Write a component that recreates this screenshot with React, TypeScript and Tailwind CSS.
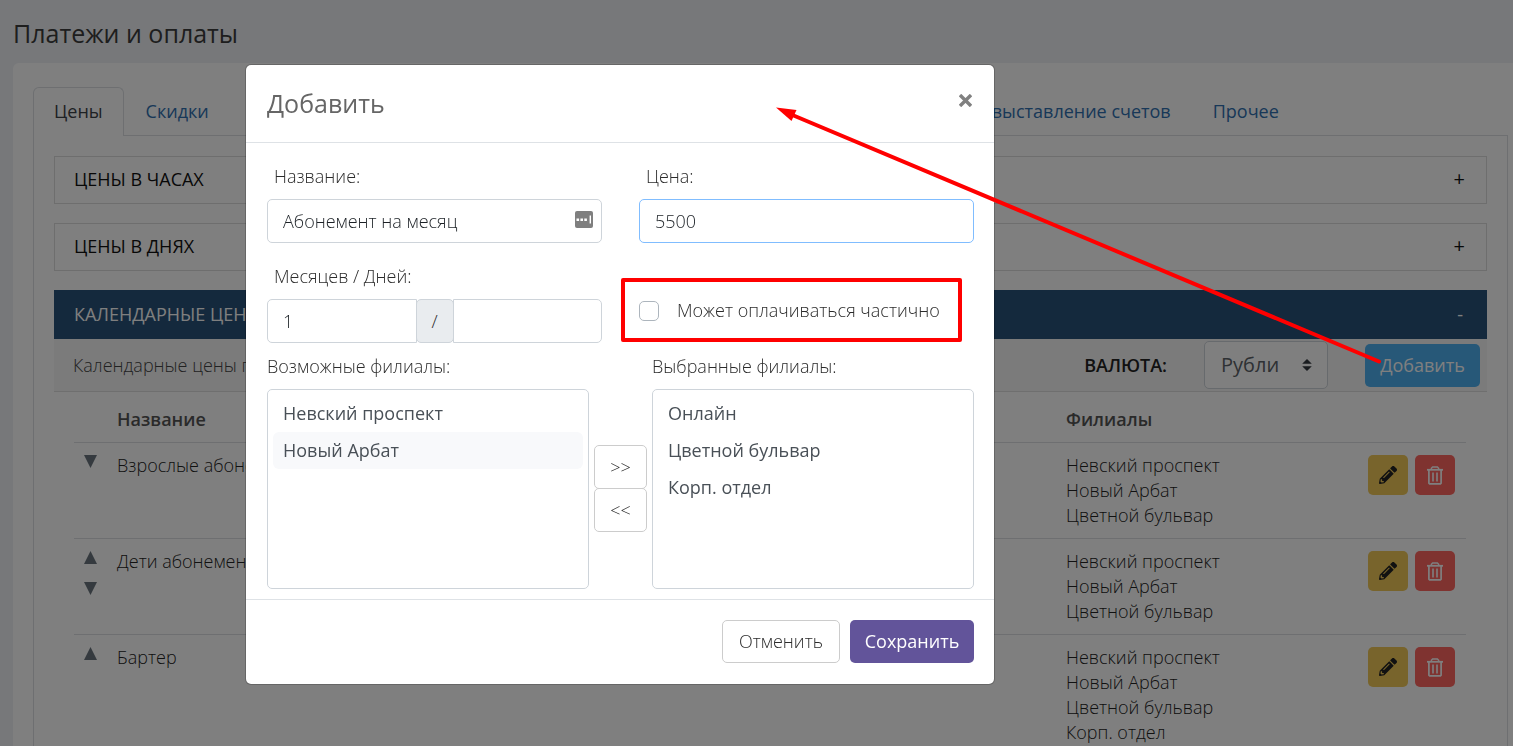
import { useState } from "react";
import { FaPencilAlt } from "react-icons/fa";

interface PriceRow {
  name: string;
  branches: string[];
  up: boolean;
  down: boolean;
}

const rows: PriceRow[] = [
  {
    name: "Взрослые абонемент",
    branches: ["Невский проспект", "Новый Арбат", "Цветной бульвар"],
    up: false,
    down: true,
  },
  {
    name: "Дети абонемент",
    branches: ["Невский проспект", "Новый Арбат", "Цветной бульвар"],
    up: true,
    down: true,
  },
  {
    name: "Бартер",
    branches: [
      "Невский проспект",
      "Новый Арбат",
      "Цветной бульвар",
      "Корп. отдел",
    ],
    up: true,
    down: false,
  },
];

const fieldClass =
  "h-11 rounded-[5px] border bg-white px-[15px] text-lg text-[#1c2126] focus:outline-none";
const listClass =
  "block h-[200px] w-full rounded-[5px] border border-[#ced4da] p-[5px] text-[#495057]";
const optionClass = "h-[37px] rounded-md px-[10px] py-[6px] leading-[25px]";

function TrashIcon() {
  return (
    <svg width="16" height="19" viewBox="0 0 16 19" fill="none" stroke="currentColor" aria-hidden="true">
      <path d="M0 3.8h16" strokeWidth="1.8" />
      <path d="M4.4 3.5V2.2L5.6 1h4.8l1.2 1.2v1.3" strokeWidth="1.5" />
      <path d="M1.9 4v13.2l.7.7h10.8l.7-.7V4" strokeWidth="1.7" />
      <path d="M6 6.5v9M10 6.5v9" strokeWidth="1.6" />
    </svg>
  );
}

function MoveButton({ dir }: { dir: "up" | "down" }) {
  return (
    <button
      aria-label={dir === "up" ? "Выше" : "Ниже"}
      className="flex h-[31px] items-start text-[#6a757e]"
    >
      <svg width="13" height="13" viewBox="0 0 13 13" fill="currentColor">
        <path d={dir === "up" ? "M6.5 0 13 13H0z" : "M0 0h13L6.5 13z"} />
      </svg>
    </button>
  );
}

function Accordion({ title }: { title: string }) {
  return (
    <button className="mb-[19px] flex h-12 w-full items-center justify-between border border-[#dcdcdc] pr-[21px] pb-[2px] pl-[19px] text-lg font-medium text-[#111]">
      <span>{title}</span>
      <span className="text-xl font-normal">+</span>
    </button>
  );
}

function Page() {
  return (
    <div className="pt-[15px] pl-[13px]">
      <h1 className="mb-3 text-[25px] leading-9 font-normal text-[#3c3c3c]">
        Платежи и оплаты
      </h1>
      <div className="rounded-tl-md bg-white pt-6 pr-[5px] pl-5">
        {/* Tabs */}
        <nav className="flex h-[49px] border-b border-[#dcdfe3] text-lg leading-[48px] font-medium text-[#3070b0]">
          <a
            href="#prices"
            className="-mb-px h-[49px] rounded-t-md border border-b-0 border-[#dcdfe3] bg-white px-5 leading-[46px] text-[#3c4248]"
          >
            Цены
          </a>
          <a href="#discounts" className="px-[22px]">
            Скидки
          </a>
          <span className="w-[740px]" />
          <a href="#invoices" className="px-[21px]">
            выставление счетов
          </a>
          <a href="#other" className="px-[21px]">
            Прочее
          </a>
        </nav>

        <div className="border-x border-[#dcdfe3] px-5 pt-5">
          <Accordion title="ЦЕНЫ В ЧАСАХ" />
          <Accordion title="ЦЕНЫ В ДНЯХ" />
          <button className="flex h-[49px] w-full items-center justify-between bg-[#28527a] pr-6 pb-px pl-5 text-lg font-medium text-white">
            <span>КАЛЕНДАРНЫЕ ЦЕНЫ</span>
            <span>-</span>
          </button>

          {/* Toolbar */}
          <div className="flex h-[53px] items-center border-b border-[#dfdfdf] bg-[#f7f7f7] pr-[7px] pl-[19px] text-lg">
            <span className="flex-1 text-[#444]">
              Календарные цены по месяцам
            </span>
            <label htmlFor="currency" className="font-semibold text-[#222]">
              ВАЛЮТА:
            </label>
            <div className="relative mr-[37px] ml-[37px]">
              <select
                id="currency"
                className="h-12 w-[124px] appearance-none rounded-[5px] border border-[#ced4da] bg-white pl-4 text-xl font-normal text-[#5c6268]"
              >
                <option>Рубли</option>
              </select>
              <svg
                className="pointer-events-none absolute top-[18px] right-4"
                width="10"
                height="12"
                viewBox="0 0 4 5"
                fill="#343a40"
              >
                <path d="M2 0L0 2h4zm0 5L0 3h4z" />
              </svg>
            </div>
            <button className="h-[43px] w-[115px] rounded-[5px] bg-[#4eb0f0] font-normal text-white">
              Добавить
            </button>
          </div>

          <div className="pt-[5px] pr-[21px] pl-5">
            <table className="w-full border-collapse text-left text-lg leading-[25px] text-[#222]">
              <thead className="text-[#555]">
                <tr className="border-b border-[#dcdfe3]">
                  <th className="w-[43px]" />
                  <th className="py-[10px] font-semibold">Название</th>
                  <th className="w-[302px] py-[10px] font-semibold">Филиалы</th>
                  <th className="w-[98px]" />
                </tr>
              </thead>
              <tbody>
                {rows.map((row) => (
                  <tr
                    key={row.name}
                    className="border-b border-[#dcdfe3] align-top"
                  >
                    <td className="pt-3 pl-[10px]">
                      {row.up && <MoveButton dir="up" />}
                      {row.down && <MoveButton dir="down" />}
                    </td>
                    <td className="py-[10px]">{row.name}</td>
                    <td className="py-[10px]">
                      {row.branches.map((b) => (
                        <div key={b}>{b}</div>
                      ))}
                    </td>
                    <td className="pt-3">
                      <div className="flex gap-[7px]">
                        <button
                          aria-label="Изменить"
                          className="flex size-10 items-center justify-center rounded-[5px] bg-[#f0c859] text-[#222]"
                        >
                          <FaPencilAlt size={18} />
                        </button>
                        <button
                          aria-label="Удалить"
                          className="flex size-10 items-center justify-center rounded-[5px] bg-[#ff6660] text-white"
                        >
                          <TrashIcon />
                        </button>
                      </div>
                    </td>
                  </tr>
                ))}
              </tbody>
            </table>
          </div>
        </div>
      </div>
    </div>
  );
}

function Modal() {
  const [name, setName] = useState("Абонемент на месяц");
  const [price, setPrice] = useState("5500");
  const [months, setMonths] = useState("1");
  const [days, setDays] = useState("");

  return (
    <div
      role="dialog"
      aria-label="Добавить"
      className="w-full max-w-[750px] rounded-md border border-black/20 bg-white bg-clip-padding text-lg leading-[25px] text-[#2b2b2b]"
    >
      {/* Header */}
      <div className="flex h-[78px] items-start justify-between border-b border-[#dee2e6] pt-5 pr-5 pl-[21px]">
        <h2 className="text-[25px] leading-9 font-normal text-[#666]">
          Добавить
        </h2>
        <button aria-label="Закрыть" className="mt-[9px] mr-[2px] text-[#808080]">
          <svg width="13" height="13" viewBox="0 0 13 13" stroke="currentColor" strokeWidth="3.4">
            <path d="M1 1l11 11M12 1L1 12" />
          </svg>
        </button>
      </div>

      {/* Body */}
      <div className="pt-[21px] pr-5 pb-[10px] pl-[21px]">
        <div className="grid grid-cols-2 gap-x-[37px] gap-y-[21px]">
          <div>
            <label htmlFor="name" className="mb-[10px] block pl-[7px]">
              Название:
            </label>
            <div className="relative">
              <input
                id="name"
                value={name}
                onChange={(e) => setName(e.target.value)}
                className={`${fieldClass} w-full border-[#ced4da]`}
              />
              <svg
                className="absolute top-3 right-[9px]"
                width="18"
                height="17"
                viewBox="0 0 18 17"
              >
                <rect width="18" height="17" rx="2" fill="#7f7f7f" />
                <path d="M1.5 7.5h2.6v2.4H1.5zM5.4 7.5H8v2.4H5.4zM9.3 7.5h2.6v2.4H9.3zM14.6 4.5H16v8h-1.4z" fill="#fff" />
              </svg>
            </div>
          </div>
          <div>
            <label htmlFor="price" className="mb-[10px] block pl-[7px]">
              Цена:
            </label>
            <input
              id="price"
              value={price}
              onChange={(e) => setPrice(e.target.value)}
              className={`${fieldClass} w-full border-[#80bdff]`}
            />
          </div>
          <div>
            <label htmlFor="months" className="mb-[10px] block pl-[7px]">
              Месяцев / Дней:
            </label>
            <div className="flex">
              <input
                id="months"
                value={months}
                onChange={(e) => setMonths(e.target.value)}
                className={`${fieldClass} min-w-0 flex-1 rounded-r-none border-[#ced4da]`}
              />
              <span className="-mx-px flex w-[38px] items-center justify-center rounded-[5px] border border-[#ced4da] bg-[#e9ecef]">
                /
              </span>
              <input
                aria-label="Дней"
                value={days}
                onChange={(e) => setDays(e.target.value)}
                className={`${fieldClass} min-w-0 flex-1 rounded-l-none border-[#ced4da]`}
              />
            </div>
          </div>
          <div className="pt-[34px]">
            <label className="relative flex items-center gap-[18px]">
              <input
                type="checkbox"
                className="size-5 appearance-none rounded-[5px] border border-[#adb5bd] bg-white"
              />
              Может оплачиваться частично
              <span className="pointer-events-none absolute -top-5 right-3 -bottom-[19px] -left-[18px] rounded-xs border-4 border-[#ff0000]" />
            </label>
          </div>
        </div>

        {/* Branch picker */}
        <div className="mt-[11px] flex gap-[5px]">
          <div className="flex-1">
            <label htmlFor="available" className="mb-[10px] block">
              Возможные филиалы:
            </label>
            <select id="available" multiple className={listClass}>
              <option className={optionClass}>Невский проспект</option>
              <option className={`${optionClass} bg-[#f8f9fb]`}>
                Новый Арбат
              </option>
            </select>
          </div>
          <div className="flex w-[53px] flex-col pt-[91px]">
            <button className="h-11 rounded-[5px] border border-[#ccc]">
              &gt;&gt;
            </button>
            <button className="-mt-px h-11 rounded-[5px] border border-[#ccc]">
              &lt;&lt;
            </button>
          </div>
          <div className="flex-1">
            <label htmlFor="selected" className="mb-[10px] block">
              Выбранные филиалы:
            </label>
            <select id="selected" multiple className={listClass}>
              <option className={optionClass}>Онлайн</option>
              <option className={optionClass}>Цветной бульвар</option>
              <option className={optionClass}>Корп. отдел</option>
            </select>
          </div>
        </div>
      </div>

      {/* Footer */}
      <div className="flex justify-end gap-[10px] border-t border-[#dee2e6] px-5 pt-5 pb-[21px]">
        <button className="h-[43px] w-[118px] rounded-[5px] border border-[#ccc]">
          Отменить
        </button>
        <button className="h-[43px] w-[124px] rounded-[5px] bg-[#62549a] font-normal text-white">
          Сохранить
        </button>
      </div>
    </div>
  );
}

export default function App() {
  return (
    <div className="h-screen overflow-hidden bg-[#eef1f5] font-['Open_Sans','Noto_Sans',sans-serif] font-light">
      <Page />
      <div className="fixed inset-0 flex items-start justify-center bg-black/50 pt-16 pr-[273px]">
        <Modal />
      </div>

      {/* Pointer from the add button to the dialog */}
      <svg
        className="pointer-events-none fixed top-0 left-0"
        width="1400"
        height="400"
        fill="#ff0000"
        aria-hidden="true"
      >
        <path d="M1379 361.5L790 114" stroke="#ff0000" strokeWidth="4" strokeLinecap="round" />
        <path d="M776 107.5L796.5 110L791.5 121z" />
      </svg>
    </div>
  );
}
